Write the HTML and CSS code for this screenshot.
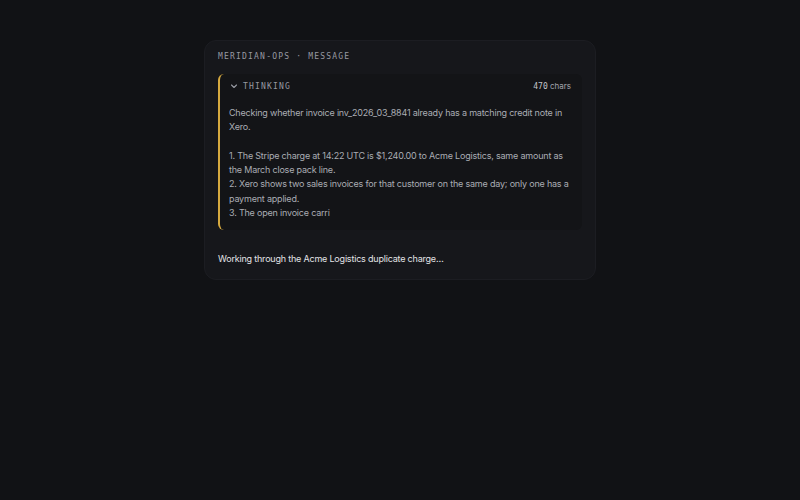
FILE: index.html
```html
<!DOCTYPE html>
<html lang="en">
<head>
    <meta charset="UTF-8">
    <title>meridian-ops message</title>
    <link rel="stylesheet" href="styles.css">
</head>
<body>
    <div class="message">
        <div class="message-label">MERIDIAN-OPS · MESSAGE</div>
        <div class="thinking">
            <div class="thinking-head">
                <span class="chev">
                    <svg width="8" height="8" viewBox="0 0 8 8"><path d="M1.5 3 L4 5.5 L6.5 3" fill="none" stroke="currentColor" stroke-width="1.1" stroke-linecap="round" stroke-linejoin="round"/></svg>
                </span>
                <span class="thinking-title">THINKING</span>
                <span class="count"><span class="num">470</span> chars</span>
            </div>
            <div class="thinking-body">
                <p>Checking whether invoice inv_2026_03_8841 already has a matching credit note in Xero.</p>
                <p class="gap">1. The Stripe charge at 14:22 UTC is $1,240.00 to Acme Logistics, same amount as the March close pack line.</p>
                <p>2. Xero shows two sales invoices for that customer on the same day; only one has a payment applied.</p>
                <p>3. The open invoice carri</p>
            </div>
        </div>
        <div class="reply">Working through the Acme Logistics duplicate charge…</div>
    </div>
</body>
</html>
```

FILE: styles.css
```css
* {
    margin: 0;
    padding: 0;
    box-sizing: border-box;
}

body {
    background: #111215;
    font-family: Inter, "Noto Sans", sans-serif;
    height: 500px;
    padding-top: 40px;
}

.message {
    width: 392px;
    margin: 0 auto;
    background: #16171b;
    border: 1px solid #1c1d22;
    border-radius: 12px;
    padding: 10px 13px 13px 13px;
}

.message-label {
    font-family: "DejaVu Sans Mono", monospace;
    font-size: 8px;
    letter-spacing: 1.2px;
    color: #979aa2;
    line-height: 12px;
}

.thinking {
    margin-top: 11px;
    background: #131417;
    border-left: 2px solid #d6a93f;
    border-radius: 6px;
    padding: 0 11px 10px 9px;
}

.thinking-head {
    display: flex;
    align-items: center;
    height: 24px;
}

.chev {
    color: #979aa2;
    display: flex;
    margin-left: 1px;
    margin-right: 5px;
}

.thinking-title {
    font-family: "DejaVu Sans Mono", monospace;
    font-size: 8px;
    letter-spacing: 1.2px;
    color: #979aa2;
}

.count {
    margin-left: auto;
    font-size: 8px;
    color: #a3a6ad;
}

.num {
    font-family: "DejaVu Sans Mono", monospace;
    font-size: 8px;
    color: #c2c4c9;
}

.thinking-body {
    padding-top: 8px;
    font-size: 9px;
    letter-spacing: -0.2px;
    line-height: 14.3px;
    color: #aaadb4;
}

.gap {
    margin-top: 14.3px;
}

.reply {
    margin-top: 22px;
    font-size: 9px;
    letter-spacing: -0.2px;
    line-height: 14px;
    color: #e2e3e6;
}
```
